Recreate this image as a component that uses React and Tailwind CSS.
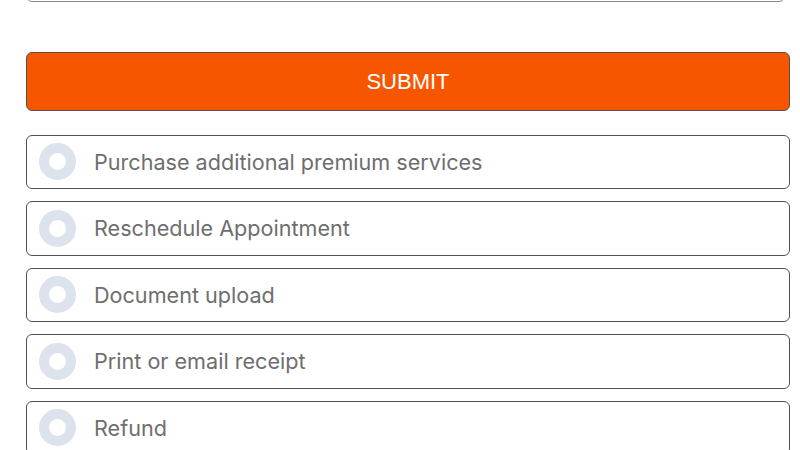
export default function App() {
  const options = [
    "Purchase additional premium services",
    "Reschedule Appointment",
    "Document upload",
    "Print or email receipt",
    "Refund",
  ];
  return (
    <div className="w-[800px] h-[450px] overflow-hidden bg-white">
      <div className="pl-[26px] pr-[10px]">
        <div className="mt-[-38px] h-[40px] mr-[5px] rounded-[6px] border-[1.5px] border-[#8a8a8a]" />
        <button
          className="mt-[50px] w-full h-[58.5px] flex items-center justify-center rounded-[6px] border-[1.5px] border-[#5e5048] bg-[#f75600] text-white text-[22px] leading-none"
          style={{ fontFamily: '"Liberation Sans", Arial, sans-serif' }}
        >
          <span className="mt-[2px]">SUBMIT</span>
        </button>
        <div className="mt-[24px] flex flex-col gap-[12px]">
          {options.map((o) => (
            <div
              key={o}
              className="h-[54.5px] shrink-0 flex items-center rounded-[6px] border-[1.8px] border-[#505050] pl-[12px]"
            >
              <div className="w-[37px] h-[37px] rounded-full border-[10.5px] border-[#dde3ec] bg-white shrink-0" />
              <span
                className="ml-[18px] mt-[2px] text-[21.6px] text-[#6e6e6e] leading-none"
                style={{ fontFamily: 'Inter, "Noto Sans", sans-serif' }}
              >
                {o}
              </span>
            </div>
          ))}
        </div>
      </div>
    </div>
  );
}
